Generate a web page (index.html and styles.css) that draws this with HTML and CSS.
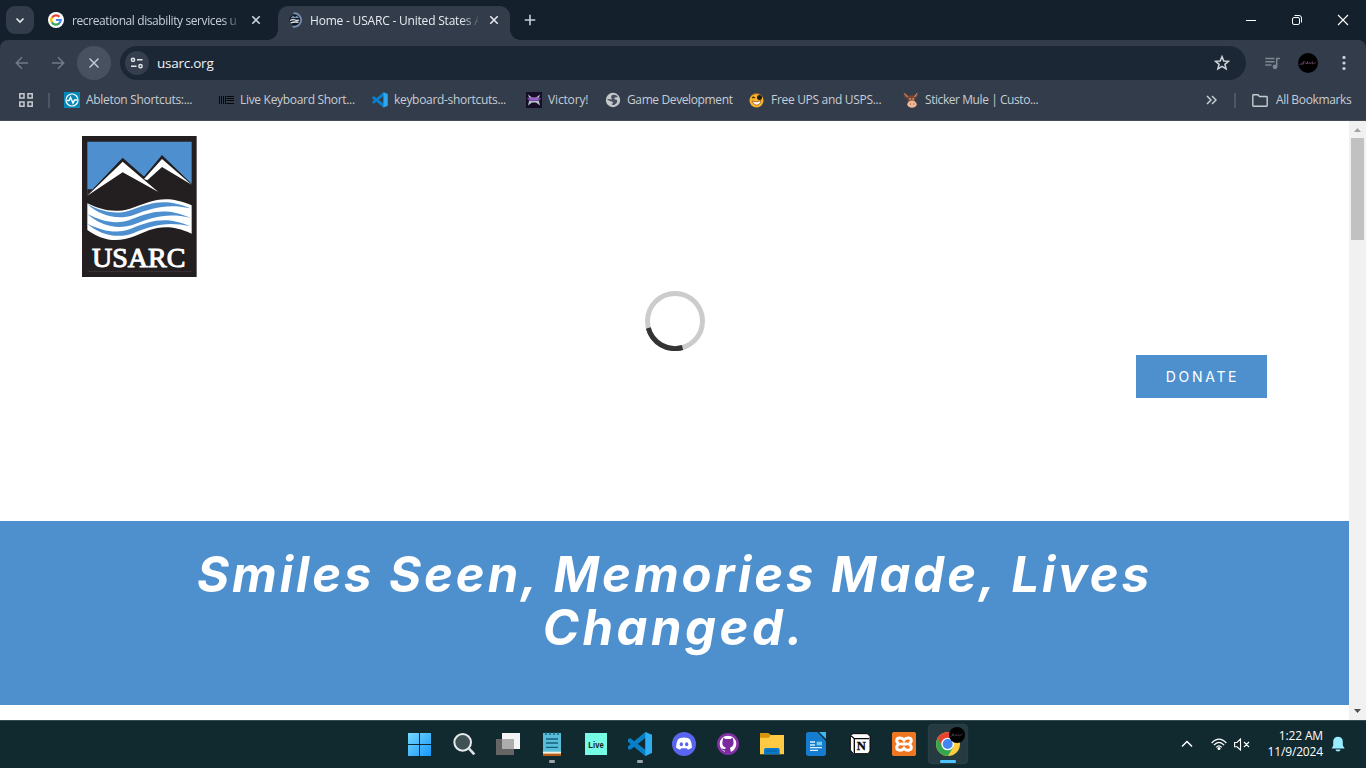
FILE: index.html
```html
<!DOCTYPE html>
<html lang="en">
<head>
<meta charset="utf-8">
<title>Home - USARC</title>
<link rel="stylesheet" href="styles.css">
</head>
<body>
<div class="screen">
  <header class="tabstrip">
    <button class="tab-search" aria-label="Search tabs"><svg width="28" height="28" viewBox="0 0 28 28"><path d="M10.500 12.500L14 16L17.500 12.500" fill="none" stroke="#e3e6ea" stroke-width="1.700"/></svg></button>
    <div class="tab tab-idle">
      <svg class="fav" width="16" height="16" viewBox="0 0 16 16"><circle cx="8" cy="8" r="8" fill="#fff"/><g fill="none" stroke-width="2.200"><path d="M4 5.700A4.700 4.700 0 0 1 11.500 4.800" stroke="#ea4335"/><path d="M4.100 10.600A4.700 4.700 0 0 1 4 5.400" stroke="#fbbc05"/><path d="M11.300 11.300A4.700 4.700 0 0 1 4 10.400" stroke="#34a853"/><path d="M8 8h4.700A4.700 4.700 0 0 1 11.100 11.500" stroke="#4285f4"/></g></svg>
      <span class="tab-title t-google">recreational disability services u</span>
      <svg class="close" width="10" height="10" viewBox="0 0 10 10"><path d="M1.300 1.300L8.700 8.700M8.700 1.300L1.300 8.700" stroke="#c9d0da" stroke-width="1.600"/></svg>
    </div>
    <div class="tab tab-active">
      <svg class="fav" width="16" height="16" viewBox="0 0 16 16"><circle cx="7.500" cy="8" r="5.200" fill="#11161d"/><path d="M3.200 6.300L6 3.800L8 5L10 3.700L12 6Z" fill="#7894b5"/><path d="M3 8.500Q6 7 8 8T12 8M3.500 11Q7 9.500 11.500 10.300" fill="none" stroke="#e0e8ee" stroke-width="1.300"/><path d="M6.500 1.200A6.800 6.800 0 1 1 5.500 14.500" fill="none" stroke="#7590b5" stroke-width="1.700"/></svg>
      <span class="tab-title t-home">Home - USARC - United States A</span>
      <svg class="close" width="10" height="10" viewBox="0 0 10 10"><path d="M1.300 1.300L8.700 8.700M8.700 1.300L1.300 8.700" stroke="#e6e9ed" stroke-width="1.600"/></svg>
    </div>
    <svg class="new-tab" width="12" height="12" viewBox="0 0 12 12"><path d="M6 .7V11.300M.7 6H11.300" stroke="#c3cede" stroke-width="1.600"/></svg>
    <div class="win-controls">
      <svg width="46" height="40" viewBox="0 0 46 40"><path d="M18 20.500H28" stroke="#fff"/></svg>
      <svg width="46" height="40" viewBox="0 0 46 40"><rect x="18.500" y="17.500" width="7" height="7" rx="1.500" fill="none" stroke="#fff"/><path d="M20.500 15.500H25A2.500 2.500 0 0 1 27.500 18V22.500" fill="none" stroke="#fff"/></svg>
      <svg width="46" height="40" viewBox="0 0 46 40"><path d="M18 15L28 25M28 15L18 25" stroke="#fff" stroke-width="1.100"/></svg>
    </div>
  </header>

  <div class="chrome">
    <nav class="toolbar">
      <svg class="arrow" width="14" height="14" viewBox="0 0 14 14"><path d="M13 7H1.500M7 1.300L1.300 7L7 12.700" fill="none" stroke="#727a87" stroke-width="1.500"/></svg>
      <svg class="arrow fwd" width="14" height="14" viewBox="0 0 14 14"><path d="M1 7H12.500M7 1.300L12.700 7L7 12.700" fill="none" stroke="#727a87" stroke-width="1.500"/></svg>
      <button class="stop" aria-label="Stop"><svg width="12" height="12" viewBox="0 0 12 12"><path d="M1.500 1.500L10.500 10.500M10.500 1.500L1.500 10.500" stroke="#c6cfde" stroke-width="1.400"/></svg></button>
      <div class="omnibox">
        <span class="site-info"><svg width="14" height="12" viewBox="0 0 14 12"><g fill="none" stroke="#e2e6ea" stroke-width="1.500"><circle cx="3" cy="2.800" r="1.600"/><path d="M7 2.800H12.500M1 9.200H6.500"/><circle cx="10.500" cy="9.200" r="1.600"/></g></svg></span>
        <span class="url">usarc.org</span>
        <svg class="star" width="16" height="16" viewBox="0 0 16 16"><path d="M8 1.600L9.800 6L14.500 6.300L10.900 9.300L12.100 13.900L8 11.400L3.900 13.900L5.100 9.300L1.500 6.300L6.200 6Z" fill="none" stroke="#cfd4da" stroke-width="1.500"/></svg>
      </div>
      <svg class="media" width="16" height="13" viewBox="0 0 16 13"><path d="M.3 1.500H9.500M.3 4.700H9.500M.3 8H6.500M15 1.500H11.700V9.500" fill="none" stroke="#7e8792" stroke-width="1.500"/><circle cx="10" cy="9.800" r="2.400" fill="#7e8792"/></svg>
      <svg class="avatar" width="20" height="20" viewBox="0 0 20 20"><circle cx="10" cy="10" r="10" fill="#000"/><path d="M1.500 11.500Q6 10.500 6.500 8.500Q4 8.500 5.500 10Q6 11.500 3.500 11.500M7 11L8 9.500L9 11L9.500 8.500L10 11L12 9.500L12.500 11L14.500 8.500V11L18 9.500" fill="none" stroke="#6d4a6d" stroke-width=".7"/></svg>
      <svg class="kebab" width="4" height="16" viewBox="0 0 4 16"><g fill="#cbd2dc"><circle cx="2" cy="2.400" r="1.600"/><circle cx="2" cy="8" r="1.600"/><circle cx="2" cy="13.500" r="1.600"/></g></svg>
    </nav>
    <nav class="bookmarks">
      <svg class="apps" width="14" height="14" viewBox="0 0 14 14"><g fill="none" stroke="#c8ccd0" stroke-width="1.500"><path d="M.8.8H5V5H.8ZM9 .8H13.200V5H9ZM.8 9H5V13.200H.8ZM9 9H13.200V13.200H9Z"/></g></svg>
      <i class="sep"></i>
      <a class="bm b1"><svg width="16" height="16" viewBox="0 0 16 16"><path d="M0 0H16V16H0Z" fill="#0587b9"/><circle cx="8" cy="8" r="6" fill="none" stroke="#fff" stroke-width="1.200"/><path d="M3 8.500H5L6.500 5.500L9 11L10.500 8H13" fill="none" stroke="#fff" stroke-width="1.500"/></svg><span>Ableton Shortcuts:...</span></a>
      <a class="bm b2"><svg width="16" height="16" viewBox="0 0 16 16"><path d="M1.500 4V12M3.500 4V12M5.500 4V12M7.500 4V12M8.500 4.500H16M8.500 6.500H16M8.500 8.500H16M8.500 11.500H16" stroke="#07090b"/></svg><span>Live Keyboard Short...</span></a>
      <a class="bm b3"><svg width="16" height="16" viewBox="52 47 75 75"><path d="M106 48L114 52V116L106 120L54 78V70L60 66L106 101V66L60 102L54 98V91Z" fill="#0a80cc"/><path d="M106 48L126 56V111L106 120Z" fill="#2aa9f2"/></svg><span>keyboard-shortcuts...</span></a>
      <a class="bm b4"><svg width="16" height="16" viewBox="0 0 16 16"><path d="M0 0H16V16H0Z" fill="#160d27"/><path d="M2 2.500L6 5.500H10L14 2.500L12.500 7L14 13.500L10 10.500H6L2 13.500L3.500 7Z" fill="#b6c1cc"/><path d="M1 6Q8 4.500 15 6L13 9H3Z" fill="#75479f"/><path d="M4 7H12" stroke="#a878d7" stroke-width="1.200"/></svg><span>Victory!</span></a>
      <a class="bm b5"><svg width="16" height="16" viewBox="0 0 16 16"><circle cx="8" cy="8" r="7.200" fill="#c5c8cb"/><path d="M7 3Q11 2 13 5L10 5.500L9 7L12 8Q13 11 9 13L7 13L8 10L5 9L2 7.500L3.500 7L7 7.500L6 5Z" fill="#48525f"/></svg><span>Game Development</span></a>
      <a class="bm b6"><svg width="16" height="16" viewBox="0 0 16 16"><circle cx="7.500" cy="8.500" r="7" fill="#fbb329"/><path d="M3 3Q8 0 13 4" fill="none" stroke="#9e6a16" stroke-width=".8"/><circle cx="10.500" cy="5.500" r="2.500" fill="#201d1a"/><path d="M3 6Q4.500 4.500 6 6" fill="none" stroke="#503515" stroke-width="1.200"/><path d="M3 9Q8 11 12 8.500Q11 13.500 7 13Q4 12 3 9Z" fill="#fff" stroke="#864e13" stroke-width=".7"/></svg><span>Free UPS and USPS...</span></a>
      <a class="bm b7"><svg width="16" height="16" viewBox="0 0 16 16"><path d="M.3.3L5.500 3.500H10.500L15 .3L14.500 4L12 6.500V11H5L4.500 7L1.500 5Z" fill="#7d4632"/><path d="M1.500 1.500L4.500 5M14 1.500L11.500 5" stroke="#d6a086"/><ellipse cx="9" cy="12.200" rx="4.700" ry="3.600" fill="#efb594"/><path d="M6.500 7H7.700M9.500 7H10.700" stroke="#fff" stroke-width="1.200"/><path d="M7 12H8M10.500 12H11.500" stroke="#8c5546"/></svg><span>Sticker Mule | Custo...</span></a>
      <svg class="more" width="11" height="10" viewBox="0 0 11 10"><path d="M1 1L5 5L1 9M6 1L10 5L6 9" fill="none" stroke="#c6cdd5" stroke-width="1.500"/></svg>
      <i class="sep sep-right"></i>
      <a class="all"><svg width="16" height="13" viewBox="0 0 16 13"><path d="M.8 1.500Q.8.800 1.500.800H6L7.500 2.500H14.500Q15.200 2.500 15.200 3.200V11.500Q15.200 12.200 14.500 12.200H1.500Q.8 12.200.8 11.500Z" fill="none" stroke="#c6cbd1" stroke-width="1.400"/></svg><span>All Bookmarks</span></a>
    </nav>
  </div>

  <main class="viewport">
    <div class="page">
      <section class="hero">
        <svg class="logo" width="115" height="141" viewBox="36 30 345 423">
          <path d="M36 30H380V453H36Z" fill="#231f20"/>
          <path d="M52 47H365V174L276 88L222 152L158 96L52 207Z" fill="#4e90cf"/>
          <path d="M52 207L158 96L222 152L276 88L365 174V190H52Z" fill="#231f20"/>
          <path d="M52 209L158 107L265 198L158 139ZM222 159L276 99L365 176L276 123L232 163Z" fill="#fff"/>
          <path d="M52 232C90 250 130 263 180 248C245 226 282 202 365 238V323C285 286 242 310 195 330C140 352 95 343 52 312Z" fill="#fff"/>
          <g fill="#4e90cf">
            <path d="M52 235C100 259 142 268 186 251C245 229 288 216 361 247C290 232 248 246 193 266C142 284 92 270 52 235Z"/>
            <path d="M52 264C100 288 142 297 186 279C245 256 288 244 361 275C290 260 248 274 193 295C142 313 92 299 52 264Z"/>
            <path d="M52 293C100 316 142 325 186 307C245 284 288 270 361 301C290 285 248 299 193 320C142 340 92 327 52 293Z"/>
          </g>
          <text x="66" y="424" class="logo-name" textLength="280" lengthAdjust="spacingAndGlyphs">USARC</text>
          <path d="M52 436H365" stroke="#4a3b41" stroke-width="2"/>
        </svg>
        <svg class="spinner" width="60" height="60" viewBox="0 0 60 60"><circle cx="30" cy="30" r="27.500" fill="none" stroke="#ccc" stroke-width="5"/><path d="M3.300 37A27.500 27.500 0 0 0 37.500 56.500" fill="none" stroke="#333" stroke-width="5"/></svg>
        <a class="donate">DONATE</a>
      </section>
      <section class="banner"><h1><span class="l1">Smiles Seen, Memories Made, Lives</span><span class="l2">Changed.</span></h1></section>
    </div>
    <aside class="scrollbar">
      <svg width="17" height="17" viewBox="0 0 17 17"><path d="M5 11L8.500 7L12 11Z" fill="#a3a3a3"/></svg>
      <i class="thumb"></i>
      <svg class="down" width="17" height="17" viewBox="0 0 17 17"><path d="M5 6L8.500 10L12 6Z" fill="#505050"/></svg>
    </aside>
  </main>

  <footer class="taskbar">
    <svg width="44" height="48" viewBox="9 12 132 144"><defs><linearGradient id="win" x2="1" y2="1"><stop stop-color="#78d8fc"/><stop offset="1" stop-color="#1598fa"/></linearGradient></defs><path d="M39 51H72V84H39ZM75 51H108V84H75ZM39 87H72V120H39ZM75 87H108V120H75Z" fill="url(#win)"/></svg>
    <svg width="44" height="48" viewBox="141 12 132 144"><path d="M222 98L238 115" stroke="#dce1e6" stroke-width="8"/><circle cx="203" cy="79" r="25" fill="#415257" stroke="#e8ebed" stroke-width="6"/></svg>
    <svg width="44" height="48" viewBox="273 12 132 144"><path d="M321 51H375V99H321Z" fill="#f4f4f4"/><path d="M303 69H357V117H303Z" fill="#656565"/><path d="M321 69H357V99H321Z" fill="#adadad"/></svg>
    <svg width="44" height="48" viewBox="405 12 132 144"><path d="M444 51H498V110H444Z" fill="#59bdd9"/><path d="M444 107H498V114H444Z" fill="#f4efe3"/><path d="M444 113H498V120H444Z" fill="#b95d12"/><path d="M453 48V57M465 48V57M477 48V57M489 48V57M453 69H489M453 81H489M453 94H489" stroke="#12607a" stroke-width="4"/><rect x="462" y="132" width="18" height="9" rx="4" fill="#9aa4a7"/></svg>
    <svg width="44" height="48" viewBox="537 12 132 144"><path d="M570 51H636V117H570Z" fill="#76fbe5"/><text x="580" y="95" class="live" textLength="46" lengthAdjust="spacingAndGlyphs">Live</text></svg>
    <svg width="44" height="48" viewBox="24 12 132 144"><path d="M106 48L114 52V116L106 120L54 78V70L60 66L106 101V66L60 102L54 98V91Z" fill="#087fc7"/><path d="M106 48L126 56V111L106 120Z" fill="#2eaff4"/><rect x="81" y="132" width="18" height="9" rx="4" fill="#9aa4a7"/></svg>
    <svg width="44" height="48" viewBox="156 12 132 144"><circle cx="222" cy="84" r="36" fill="#5965ef"/><path d="M211 66Q222 63 233 66L240 70Q246 81 246 95L234 101L230 97H214L210 101L198 95Q198 81 204 70Z" fill="#fff"/><ellipse cx="214" cy="85" rx="5" ry="6" fill="#5965ef"/><ellipse cx="230" cy="85" rx="5" ry="6" fill="#5965ef"/></svg>
    <svg width="44" height="48" viewBox="288 12 132 144"><circle cx="354" cy="84" r="33" fill="#8131a3"/><circle cx="354" cy="84" r="25" fill="#fff"/><path d="M340 65L347 69H361L368 65L370 74Q374 91 360 95L363 110H345V104Q337 105 334 97Q340 100 345 99L348 95Q333 91 338 74Z" fill="#7a2a9c"/></svg>
    <svg width="44" height="48" viewBox="420 12 132 144"><path d="M450 52H474L483 57H522V115H450Z" fill="#ffca43"/><path d="M450 52H474L482 57L477 65H450Z" fill="#d89408"/><path d="M462 115V101Q462 96 467 96H504Q509 96 509 101V115Z" fill="#0878ca"/><path d="M469 105H501" stroke="#035b9f" stroke-width="3"/></svg>
    <svg width="44" height="48" viewBox="552 12 132 144"><path d="M595 48H622L648 76V112Q648 120 640 120H595Q588 120 588 112V55Q588 48 595 48Z" fill="#167dce"/><path d="M627 48H648V69Z" fill="#38baf2"/><path d="M600 78H615M600 87H615M600 95H636M600 103H624" stroke="#d8efff" stroke-width="4"/><path d="M620 77H636V88H620Z" fill="#78cdec"/></svg>
    <svg width="44" height="48" viewBox="114 12 132 144"><path d="M151 58L159 53H202L210 61V105L204 113H160L151 102Z" fill="#fff" stroke="#080808" stroke-width="3"/><path d="M153 59L163 68H207M163 68V111" fill="none" stroke="#080808" stroke-width="4"/><text x="170" y="102" class="notion">N</text></svg>
    <svg width="44" height="48" viewBox="246 12 132 144"><rect x="276" y="48" width="72" height="72" rx="5" fill="#ef7622"/><path d="M312 72C306 63 291 64 290 73Q290 80 297 84Q290 88 290 95C291 105 306 105 312 97C318 105 333 105 334 95Q334 88 327 84Q334 80 334 73C333 64 318 63 312 72ZM302 84H322" fill="none" stroke="#fff" stroke-width="9"/></svg>
    <svg width="44" height="48" viewBox="378 12 132 144"><rect x="385" y="25" width="118" height="118" rx="12" fill="#263b41" stroke="#32474c" stroke-width="2"/><circle cx="444" cy="84" r="36" fill="#ffcf42"/><path d="M413 66A36 36 0 0 0 444 120L460 93L444 84Z" fill="#35a650"/><path d="M413 66L428 93L444 66H475A36 36 0 0 0 413 66Z" fill="#e84234"/><circle cx="443" cy="84" r="17" fill="#4285f4" stroke="#fff" stroke-width="4"/><circle cx="471" cy="57" r="24" fill="#000"/><path d="M452 61Q463 58 460 53Q453 54 462 60M464 60L468 55L471 60L476 55L478 60L488 54" fill="none" stroke="#60465d" stroke-width="2"/><rect x="420" y="132" width="48" height="9" rx="4" fill="#4cc2ff"/></svg>
    <div class="tray">
      <svg class="chev" width="12" height="8" viewBox="0 0 12 8"><path d="M1 6.500L6 1.500L11 6.500" fill="none" stroke="#fff" stroke-width="1.500"/></svg>
      <svg class="wifi" width="16" height="13" viewBox="0 0 16 13"><g fill="none" stroke="#fff" stroke-width="1.200"><path d="M.7 5Q8-2.800 15.300 5M2.900 7.200Q8 1.500 13.100 7.200M5.200 9.300Q8 6.500 10.800 9.300"/></g><circle cx="8" cy="10.500" r="1.500" fill="#fff"/></svg>
      <svg class="vol" width="17" height="13" viewBox="0 0 17 13"><path d="M.6 4.500H3L6.500 1V12L3 8.800H.6ZM10 4L15 9M15 4L10 9" fill="none" stroke="#fff" stroke-width="1.100"/></svg>
      <div class="clock"><span class="time">1:22 AM</span><span class="date">11/9/2024</span></div>
      <svg class="bell" width="14" height="16" viewBox="0 0 14 16"><path d="M1 12L2.200 9.500V5.500A4.800 4.800 0 0 1 11.800 5.500V9.500L13.700 12.500H.3ZM4.500 13.500H9.500A2.500 2 0 0 1 4.500 13.500Z" fill="#99ebff"/></svg>
    </div>
  </footer>
</div>
</body>
</html>
```
FILE: styles.css
```css
* { box-sizing: border-box; }
body { margin: 0; overflow: hidden; font: 12px/16px "Open Sans", "Noto Sans", sans-serif; }
svg { display: block; flex: none; }
button { border: 0; padding: 0; }
.screen { width: 1366px; height: 768px; display: flex; flex-direction: column; overflow: hidden; background: #15202d; }

.tabstrip { height: 40px; flex: none; display: flex; align-items: center; padding-left: 6px; }
.tab-search { width: 28px; height: 28px; border-radius: 9px; background: #323c4b; }
.tab { display: flex; align-items: center; height: 34px; align-self: flex-end; padding-bottom: 6px; }
.tab-idle { width: 244px; padding-left: 14px; }
.tab-active { width: 232px; padding-left: 9px; background: #323c4b; border-radius: 10px 10px 0 0; position: relative; }
.tab-active::before, .tab-active::after { content: ""; position: absolute; bottom: 0; width: 10px; height: 10px; }
.tab-active::before { left: -10px; background: radial-gradient(circle at 0 0, #15202d 9.500px, #323c4b 10px); }
.tab-active::after { right: -10px; background: radial-gradient(circle at 100% 0, #15202d 9.500px, #323c4b 10px); }
.tab-title { white-space: nowrap; overflow: hidden; position: relative; top: 1px; -webkit-mask-image: linear-gradient(90deg, #000 90%, rgba(0,0,0,.15)); mask-image: linear-gradient(90deg, #000 90%, rgba(0,0,0,.15)); }
.t-google { width: 168px; margin-left: 8px; color: #c6ceda; letter-spacing: -.4px; }
.t-home { width: 168px; margin-left: 7px; color: #e8ebef; letter-spacing: -.2px; }
.close { margin-left: 11px; }
.new-tab { margin-left: 14px; }
.win-controls { margin-left: auto; display: flex; }

.chrome { height: 81px; flex: none; background: linear-gradient(#323c4b 80px, #464c55 80px); border-radius: 8px 8px 0 0; }
.toolbar { height: 46px; display: flex; align-items: center; padding: 0 20px 0 15px; }
.fwd { margin-left: 22px; }
.stop { width: 34px; height: 34px; margin-left: 12px; border-radius: 50%; background: #485160; display: grid; place-items: center; }
.omnibox { width: 1126px; height: 34px; margin-left: 9px; border-radius: 17px; background: #1c2735; display: flex; align-items: center; padding: 0 16px 0 5px; }
.site-info { width: 24px; height: 24px; border-radius: 50%; background: #343e4d; display: grid; place-items: center; }
.url { margin-left: 8px; color: #f1f3f5; font-size: 13.500px; letter-spacing: -.25px; }
.star { margin-left: auto; }
.media { margin-left: 19px; }
.avatar { margin-left: 17px; }
.kebab { margin-left: 24px; }
.bookmarks { height: 34px; display: flex; align-items: center; padding-left: 19px; padding-bottom: 6px; color: #c7cdd4; }
.sep { width: 2px; height: 15px; background: #4c5664; margin: 0 14px 0 15px; }
.bm { display: flex; align-items: center; gap: 6px; white-space: nowrap; letter-spacing: -.31px; }
.b1 { width: 154px; }
.b2 { width: 154px; }
.b3 { width: 154px; }
.b4 { width: 79px; letter-spacing: -.15px; }
.b5 { width: 144px; letter-spacing: -.38px; }
.b6 { width: 154px; }
.b7 { width: 303px; letter-spacing: -.43px; }
.sep-right { margin: 0 16px 0 17px; }
.all { display: flex; align-items: center; gap: 8px; white-space: nowrap; letter-spacing: -.35px; }

.viewport { height: 599px; flex: none; display: flex; background: #fff; }
.page { width: 1349px; }
.hero { height: 400px; display: grid; grid-template-columns: 82px 563px 491px 131px; grid-template-rows: 170px 64px 43px; }
.logo { grid-column: 2; grid-row: 1 / 3; margin-top: 15px; }
.logo-name { font: 84px "Liberation Serif", serif; fill: #fff; stroke: #fff; stroke-width: 3px; }
.spinner { grid-column: 3; grid-row: 2; }
.donate { grid-column: 4; grid-row: 3; background: #4e90ce; color: #fff; display: grid; place-items: center; font: 400 14px/20px Inter, sans-serif; letter-spacing: 2.700px; padding-left: 2px; }
.banner { height: 184px; background: #4e90ce; padding-top: 27px; text-align: center; }
h1 { margin: 0; color: #fff; font: italic 700 49px/53px Inter, sans-serif; white-space: nowrap; }
.l1, .l2 { display: block; }
.l1 { letter-spacing: 2.950px; }
.l2 { letter-spacing: 3.500px; }
.scrollbar { width: 17px; background: #f1f1f1; display: flex; flex-direction: column; align-items: center; }
.thumb { width: 13px; height: 102px; background: #c1c1c1; }
.down { margin-top: auto; }

.taskbar { height: 48px; flex: none; background: #112a30; box-shadow: inset 0 1px #344a50; display: flex; padding-left: 398px; }
.live { font: 700 26px "Liberation Sans", sans-serif; fill: #14211f; }
.notion { font: 700 38px "Liberation Serif", serif; fill: #080808; stroke: #080808; }
.tray { margin-left: auto; display: flex; align-items: center; color: #fff; padding-right: 21px; }
.wifi { margin-left: 18px; }
.vol { margin-left: 7px; }
.clock { width: 72px; display: flex; flex-direction: column; align-items: flex-end; margin-right: 8px; letter-spacing: -.15px; white-space: nowrap; }
```
